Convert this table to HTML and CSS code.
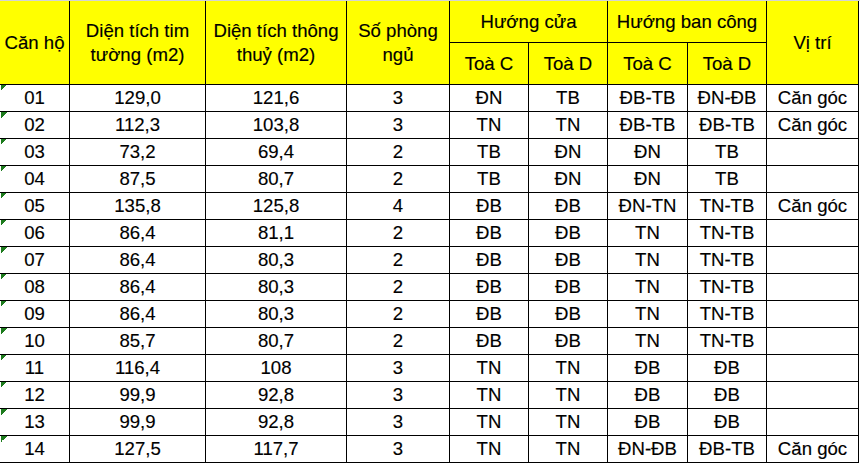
FILE: index.html
```html
<!DOCTYPE html>
<html lang="vi">
<head>
<meta charset="utf-8">
<title>Bảng căn hộ</title>
<link rel="stylesheet" href="styles.css">
</head>
<body>
<div class="sheet">
  <div class="grid">
    <div class="cell head rspan">Căn hộ</div>
    <div class="cell head rspan">Diện tích tim<br>tường (m2)</div>
    <div class="cell head rspan">Diện tích thông<br>thuỷ (m2)</div>
    <div class="cell head rspan">Số phòng<br>ngủ</div>
    <div class="cell head cspan">Hướng cửa</div>
    <div class="cell head cspan">Hướng ban công</div>
    <div class="cell head rspan">Vị trí</div>
    <div class="cell head">Toà C</div>
    <div class="cell head">Toà D</div>
    <div class="cell head">Toà C</div>
    <div class="cell head">Toà D</div>

    <div class="cell id">01</div><div class="cell">129,0</div><div class="cell">121,6</div><div class="cell">3</div><div class="cell">ĐN</div><div class="cell">TB</div><div class="cell">ĐB-TB</div><div class="cell">ĐN-ĐB</div><div class="cell">Căn góc</div>
    <div class="cell id">02</div><div class="cell">112,3</div><div class="cell">103,8</div><div class="cell">3</div><div class="cell">TN</div><div class="cell">TN</div><div class="cell">ĐB-TB</div><div class="cell">ĐB-TB</div><div class="cell">Căn góc</div>
    <div class="cell id">03</div><div class="cell">73,2</div><div class="cell">69,4</div><div class="cell">2</div><div class="cell">TB</div><div class="cell">ĐN</div><div class="cell">ĐN</div><div class="cell">TB</div><div class="cell"></div>
    <div class="cell id">04</div><div class="cell">87,5</div><div class="cell">80,7</div><div class="cell">2</div><div class="cell">TB</div><div class="cell">ĐN</div><div class="cell">ĐN</div><div class="cell">TB</div><div class="cell"></div>
    <div class="cell id">05</div><div class="cell">135,8</div><div class="cell">125,8</div><div class="cell">4</div><div class="cell">ĐB</div><div class="cell">ĐB</div><div class="cell">ĐN-TN</div><div class="cell">TN-TB</div><div class="cell">Căn góc</div>
    <div class="cell id">06</div><div class="cell">86,4</div><div class="cell">81,1</div><div class="cell">2</div><div class="cell">ĐB</div><div class="cell">ĐB</div><div class="cell">TN</div><div class="cell">TN-TB</div><div class="cell"></div>
    <div class="cell id">07</div><div class="cell">86,4</div><div class="cell">80,3</div><div class="cell">2</div><div class="cell">ĐB</div><div class="cell">ĐB</div><div class="cell">TN</div><div class="cell">TN-TB</div><div class="cell"></div>
    <div class="cell id">08</div><div class="cell">86,4</div><div class="cell">80,3</div><div class="cell">2</div><div class="cell">ĐB</div><div class="cell">ĐB</div><div class="cell">TN</div><div class="cell">TN-TB</div><div class="cell"></div>
    <div class="cell id">09</div><div class="cell">86,4</div><div class="cell">80,3</div><div class="cell">2</div><div class="cell">ĐB</div><div class="cell">ĐB</div><div class="cell">TN</div><div class="cell">TN-TB</div><div class="cell"></div>
    <div class="cell id">10</div><div class="cell">85,7</div><div class="cell">80,7</div><div class="cell">2</div><div class="cell">ĐB</div><div class="cell">ĐB</div><div class="cell">TN</div><div class="cell">TN-TB</div><div class="cell"></div>
    <div class="cell id">11</div><div class="cell">116,4</div><div class="cell">108</div><div class="cell">3</div><div class="cell">TN</div><div class="cell">TN</div><div class="cell">ĐB</div><div class="cell">ĐB</div><div class="cell"></div>
    <div class="cell id">12</div><div class="cell">99,9</div><div class="cell">92,8</div><div class="cell">3</div><div class="cell">TN</div><div class="cell">TN</div><div class="cell">ĐB</div><div class="cell">ĐB</div><div class="cell"></div>
    <div class="cell id">13</div><div class="cell">99,9</div><div class="cell">92,8</div><div class="cell">3</div><div class="cell">TN</div><div class="cell">TN</div><div class="cell">ĐB</div><div class="cell">ĐB</div><div class="cell"></div>
    <div class="cell id">14</div><div class="cell">127,5</div><div class="cell">117,7</div><div class="cell">3</div><div class="cell">TN</div><div class="cell">TN</div><div class="cell">ĐN-ĐB</div><div class="cell">ĐB-TB</div><div class="cell">Căn góc</div>
  </div>
</div>
</body>
</html>
```

FILE: styles.css
```css
html, body {
  margin: 0;
  padding: 0;
  background: #ffffff;
}

body {
  font-family: "Liberation Sans", Arial, sans-serif;
  font-size: 18.6px;
  color: #000000;
}

.sheet {
  width: 860px;
  border-top: 1px solid #d4d4d4;
}

.grid {
  display: inline-grid;
  grid-template-columns: 69px 135px 140px 102px 78px 78px 79px 78px 91px;
  grid-template-rows: 41px 41px repeat(14, 26px);
  gap: 1px;
  padding: 0 1px 1px 0;
  background: #000000;
  vertical-align: top;
}

.cell {
  background: #ffffff;
  display: flex;
  align-items: center;
  justify-content: center;
  text-align: center;
  line-height: 26px;
  white-space: nowrap;
  -webkit-text-stroke: 0.15px #000000;
}

.head {
  background: #ffff00;
  line-height: 24px;
}

.rspan {
  grid-row: span 2;
}

.cspan {
  grid-column: span 2;
}

.id {
  background-color: #ffffff;
  background-image: linear-gradient(to bottom right, #1d7b1d 50%, transparent 50%);
  background-size: 6px 6px;
  background-position: 1px 0;
  background-repeat: no-repeat;
}
```
